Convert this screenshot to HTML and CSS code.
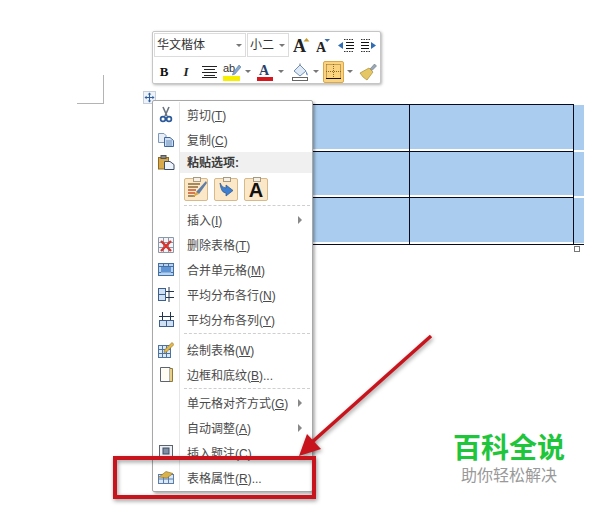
FILE: index.html
```html
<!DOCTYPE html>
<html lang="zh-CN">
<head>
    <meta charset="UTF-8">
    <meta name="viewport" content="width=device-width, initial-scale=1.0">
    <title>表格属性</title>
    <link rel="stylesheet" href="styles.css">
</head>
<body>
    <!-- page corner mark -->
    <div class="crop-mark"></div>

    <!-- selected table -->
    <div class="word-table">
        <div class="cell"></div><div class="cell"></div><div class="strip"></div>
        <div class="cell"></div><div class="cell"></div><div class="strip"></div>
        <div class="cell"></div><div class="cell"></div><div class="strip"></div>
    </div>
    <div class="resize-handle"></div>
    <div class="move-handle">
        <svg width="11" height="11" viewBox="0 0 11 11"><path d="M5.5 0.5 L7.3 2.6 H3.7 Z M5.5 10.5 L7.3 8.4 H3.7 Z M0.5 5.5 L2.6 3.7 V7.3 Z M10.5 5.5 L8.4 3.7 V7.3 Z" fill="#2f5f9e"/><path d="M5.5 2 V9 M2 5.5 H9" stroke="#2f5f9e" stroke-width="1.1"/></svg>
    </div>

    <!-- mini toolbar -->
    <div class="toolbar">
        <div class="tb-row">
            <div class="combo combo-font"><span>华文楷体</span><i class="caret"></i></div>
            <div class="combo combo-size"><span>小二</span><i class="caret"></i></div>
            <div class="tb-btn grow">
                <svg width="17" height="22" viewBox="0 0 17 22"><text x="0" y="18" class="glyph-a">A</text><path d="M13.5 4 L16.5 7.5 H10.5 Z" fill="#c79a2c"/></svg>
            </div>
            <div class="tb-btn shrink">
                <svg width="14" height="22" viewBox="0 0 14 22"><text x="0" y="18" class="glyph-a small">A</text><path d="M8.5 5 H14 L11.2 8 Z" fill="#3a6ea5"/></svg>
            </div>
            <div class="tb-btn indent">
                <svg width="17" height="15" viewBox="0 0 17 15"><path d="M6 1.5 H16 M6 13.5 H16" stroke="#333" stroke-dasharray="1.5 1"/><path d="M8 4.5 H16 M8 7.5 H16 M8 10.5 H16" stroke="#111"/><path d="M0 7.5 L5 4 V11 Z" fill="#2f6db5"/></svg>
            </div>
            <div class="tb-btn indent2">
                <svg width="17" height="15" viewBox="0 0 17 15"><path d="M1 1.5 H11 M1 13.5 H11" stroke="#333" stroke-dasharray="1.5 1"/><path d="M1 4.5 H9 M1 7.5 H9 M1 10.5 H9" stroke="#111"/><path d="M16 7.5 L11 4 V11 Z" fill="#2f6db5"/></svg>
            </div>
        </div>
        <div class="tb-row row-two">
            <div class="tb-btn w-b"><b class="bold">B</b></div>
            <div class="tb-btn w-i"><i class="italic">I</i></div>
            <div class="tb-btn w-align">
                <svg width="15" height="13" viewBox="0 0 15 13"><path d="M0 1.5 H15 M2 4.5 H13 M0 7.5 H15 M2 10.5 H13 M0 12.5 H15" stroke="#222" stroke-width="1"/></svg>
            </div>
            <div class="tb-btn w-hl">
                <svg width="18" height="19" viewBox="0 0 18 19"><text x="0" y="10" class="glyph-ab">ab</text><path d="M10 11 L16 3 L18 5 L12 12 L9.5 13 Z" fill="#8aa7cc" stroke="#5b7aa5" stroke-width=".6"/><rect x="0" y="14" width="17" height="5" fill="#f6f000"/></svg>
            </div>
            <i class="caret w-caret"></i>
            <div class="tb-btn w-color">
                <svg width="17" height="18" viewBox="0 0 17 18"><text x="2" y="12" class="glyph-color">A</text><rect x="0" y="14" width="16" height="4" fill="#d8141c"/></svg>
            </div>
            <i class="caret w-caret"></i>
            <div class="tb-btn w-fill">
                <svg width="17" height="18" viewBox="0 0 17 18"><path d="M2 8 L8 2 L14 8 L8 13 Z" fill="#dfeaf6" stroke="#6f8fb5"/><path d="M8 2 V0.5" stroke="#777"/><path d="M14 8 Q16 11 15.5 12.5 Q14 12 14 8 Z" fill="#3a6fb5"/><rect x="0.5" y="14.5" width="15" height="3" fill="#fff" stroke="#666"/></svg>
            </div>
            <i class="caret w-caret"></i>
            <div class="tb-btn w-border">
                <svg width="15" height="15" viewBox="0 0 15 15"><path d="M0.5 0.5 H14.5 V14.5 M0.5 0.5 V14.5 M7.5 0 V15 M0 7.5 H15" stroke="#8a6a2a" stroke-width="1" stroke-dasharray="1 1" fill="none"/><path d="M0 14.5 H15" stroke="#111" stroke-width="1"/></svg>
            </div>
            <i class="caret w-caret"></i>
            <div class="tb-btn w-brush">
                <svg width="18" height="18" viewBox="0 0 18 18"><path d="M11 6 L15.5 1 L17.5 3 L13 7.5 Z" fill="#9aa6b5" stroke="#6d7885" stroke-width=".6"/><path d="M10 5 L14 9 L8 17 Q4 15 1 10 Z" fill="#e6c766" stroke="#a88c3a" stroke-width=".7"/></svg>
            </div>
        </div>
    </div>

    <!-- context menu -->
    <div class="menu">
        <div class="item">
            <div class="gutter"><svg width="14" height="17" viewBox="0 0 14 17"><path d="M4 1 L8 10 M10 1 L6 10" stroke="#6a7480" stroke-width="1.6"/><circle cx="4" cy="13" r="2.4" fill="none" stroke="#2c5a9a" stroke-width="1.7"/><circle cx="10" cy="13" r="2.4" fill="none" stroke="#2c5a9a" stroke-width="1.7"/></svg></div>
            <div class="label">剪切(<u>T</u>)</div>
        </div>
        <div class="item">
            <div class="gutter"><svg width="16" height="14" viewBox="0 0 16 14"><path d="M0.5 0.5 H6 L8 2.5 V9.5 H0.5 Z" fill="#e8eef6" stroke="#7c98bc"/><path d="M6.5 4.5 H12 L15.5 7.5 V13.5 H6.5 Z" fill="#cfe0f3" stroke="#3e669c"/><path d="M8 8 H14 M8 10 H14 M8 12 H14" stroke="#6d8fbb"/></svg></div>
            <div class="label">复制(<u>C</u>)</div>
        </div>
        <div class="item item-head">
            <div class="gutter"><svg width="17" height="15" viewBox="0 0 17 15"><rect x="0.5" y="2.5" width="10" height="11.5" fill="#d8a94b" stroke="#8e6a22"/><rect x="3" y="0.5" width="5" height="3" fill="#888" stroke="#555"/><path d="M6.5 6.5 H12 L16 9.5 V14.5 H6.5 Z" fill="#eef3fa" stroke="#3e4d66"/></svg></div>
            <div class="label strong">粘贴选项:</div>
        </div>
        <div class="item item-paste">
            <div class="gutter"></div>
            <div class="paste-row">
                <div class="clip">
                    <svg width="21" height="18" viewBox="0 0 21 18"><path d="M2 4 H14 M2 7 H12 M2 16 H9" stroke="#8c6a3a" stroke-width="1.4"/><path d="M2 10 H10 M2 13 H9" stroke="#c9552c" stroke-width="1.4"/><path d="M20 1 L10 12 L13 14 L21 3 Z" fill="#5f7fa8"/><path d="M10 12 L7 17 L13 14 Z" fill="#d9a93f"/></svg>
                </div>
                <div class="clip">
                    <svg width="16" height="15" viewBox="0 0 16 15"><path d="M2 1 Q4 6 8 6 V3 L15 8.5 L8 14 V11 Q3 11 2 1 Z" fill="#3f7fd0" stroke="#28568f" stroke-width=".7"/></svg>
                </div>
                <div class="clip"><span class="clip-a">A</span></div>
            </div>
        </div>
        <div class="sep"><div class="gutter"></div><div class="dash"></div></div>
        <div class="item">
            <div class="gutter"></div>
            <div class="label">插入(<u>I</u>)</div><i class="sub"></i>
        </div>
        <div class="item">
            <div class="gutter"><svg width="16" height="16" viewBox="0 0 16 16"><path d="M0.5 0.5 H15.5 V15.5 H0.5 Z M0.5 5.5 H15.5 M0.5 10.5 H15.5 M5.5 0.5 V15.5 M10.5 0.5 V15.5" fill="#f2f4f7" stroke="#8b98a8"/><path d="M3 4 L13 14 M13 4 L3 14" stroke="#d8322a" stroke-width="2.4"/></svg></div>
            <div class="label">删除表格(<u>T</u>)</div>
        </div>
        <div class="item">
            <div class="gutter"><svg width="16" height="13" viewBox="0 0 16 13"><rect x="0.5" y="0.5" width="15" height="12" fill="#b9d2ef" stroke="#44719f"/><rect x="3" y="3.5" width="10" height="6" fill="#5f94d4"/><path d="M0.5 3.5 H15.5 M0.5 9.5 H3 M13 9.5 H15.5 M5.5 0.5 V3.5 M10.5 0.5 V3.5" stroke="#44719f"/></svg></div>
            <div class="label">合并单元格(<u>M</u>)</div>
        </div>
        <div class="item">
            <div class="gutter"><svg width="16" height="15" viewBox="0 0 16 15"><rect x="0.5" y="1.5" width="7" height="12" fill="#cfe0f3" stroke="#3e5f8c"/><path d="M0.5 7.5 H7.5" stroke="#3e5f8c"/><path d="M11 0 V15 M8 4.5 H16 M8 10.5 H16" stroke="#24364f"/></svg></div>
            <div class="label">平均分布各行(<u>N</u>)</div>
        </div>
        <div class="item">
            <div class="gutter"><svg width="15" height="15" viewBox="0 0 15 15"><rect x="0.5" y="8.5" width="14" height="6" fill="#cfe0f3" stroke="#3e5f8c"/><path d="M7.5 8.5 V14.5" stroke="#3e5f8c"/><path d="M0 4.5 H15 M3.5 0 V8 M11.5 0 V8" stroke="#24364f"/></svg></div>
            <div class="label">平均分布各列(<u>Y</u>)</div>
        </div>
        <div class="sep sep-wide"><div class="gutter"></div><div class="dash"></div></div>
        <div class="item">
            <div class="gutter"><svg width="16" height="16" viewBox="0 0 16 16"><rect x="0.5" y="3.5" width="12" height="12" fill="#dbe8f6" stroke="#4d739f"/><path d="M0.5 7.5 H12.5 M0.5 11.5 H12.5 M4.5 3.5 V15.5 M8.5 3.5 V15.5" stroke="#4d739f"/><path d="M14 0.5 L16 2.5 L8.5 10 L6 10.5 L6.5 8 Z" fill="#e3b94a" stroke="#8a6a22" stroke-width=".6"/></svg></div>
            <div class="label">绘制表格(<u>W</u>)</div>
        </div>
        <div class="item">
            <div class="gutter"><svg width="13" height="15" viewBox="0 0 13 15"><path d="M0.5 0.5 H10 V14.5 H0.5 Z" fill="#fffdf3" stroke="#5b6470"/><path d="M10 1.5 H12.5 V14.5 H10" fill="#e9cf86" stroke="#8f7a3c"/></svg></div>
            <div class="label">边框和底纹(<u>B</u>)...</div>
        </div>
        <div class="sep"><div class="gutter"></div><div class="dash"></div></div>
        <div class="item">
            <div class="gutter"></div>
            <div class="label">单元格对齐方式(<u>G</u>)</div><i class="sub"></i>
        </div>
        <div class="item">
            <div class="gutter"></div>
            <div class="label">自动调整(<u>A</u>)</div><i class="sub"></i>
        </div>
        <div class="item">
            <div class="gutter"><svg width="14" height="15" viewBox="0 0 14 15"><rect x="0.5" y="0.5" width="13" height="11" fill="#eef2f7" stroke="#5b6470"/><rect x="4" y="3" width="6" height="6" fill="#7f8ea3" stroke="#3e4d66"/><path d="M0 14 H14" stroke="#33415a" stroke-width="2"/></svg></div>
            <div class="label">插入题注(<u>C</u>)</div>
        </div>
        <div class="item">
            <div class="gutter"><svg width="16" height="13" viewBox="0 0 16 13"><rect x="0.5" y="3.5" width="15" height="9" fill="#dbe8f6" stroke="#5d7ea8"/><path d="M0.5 8 H15.5 M5.5 3.5 V12.5 M10.5 3.5 V12.5" stroke="#5d7ea8"/><path d="M1 6 L8 0.5 L15 2.5 L9 7 Z" fill="#d9b24a" stroke="#8a6a22" stroke-width=".6"/></svg></div>
            <div class="label">表格属性(<u>R</u>)...</div>
        </div>
    </div>

    <!-- red annotation -->
    <svg class="annotation" width="612" height="518" viewBox="0 0 612 518">
        <rect x="115" y="458" width="199" height="39" fill="none" stroke="#c8141c" stroke-width="4"/>
        <path d="M431 336 L311 443" stroke="#c8141c" stroke-width="3.5" fill="none"/>
        <path d="M299 456 L307 434 L321 449 Z" fill="#c8141c"/>
    </svg>

    <!-- watermark -->
    <div class="mark">
        <div class="mark-title">百科全说</div>
        <div class="mark-sub">助你轻松解决</div>
    </div>
</body>
</html>
```
FILE: styles.css
```css
/* Global styles */
body {
    font-family: "Liberation Sans", "Noto Sans CJK SC", sans-serif;
    font-size: 12px;
    color: #4a4a4a;
    background-color: #fff;
    margin: 0;
    width: 612px;
    height: 518px;
    position: relative;
    overflow: hidden;
}
svg {
    display: block;
}

/* Free canvas items */
.crop-mark {
    position: absolute;
    left: 77px;
    top: 75px;
    width: 26px;
    height: 28px;
    border-right: 1px solid #b4b4b4;
    border-bottom: 1px solid #b4b4b4;
}
.word-table {
    position: absolute;
    left: 154px;
    top: 104px;
    display: grid;
    grid-template-columns: 256px 164px 10px;
    grid-template-rows: 47px 46px 47px;
    border-bottom: 1px solid #0a0a1e;
    width: 430px;
}
.cell {
    background-color: #a9ccef;
    border-top: 1px solid #0a0a1e;
    border-right: 1px solid #0a0a1e;
    box-shadow: inset 0 -2px 0 #fff;
}
.strip {
    background-color: #a9ccef;
    margin-top: 1px;
    box-shadow: inset 0 -1px 0 #fff;
}
.resize-handle {
    position: absolute;
    left: 574px;
    top: 246px;
    width: 4px;
    height: 4px;
    border: 1px solid #777;
    background-color: #fff;
}
.move-handle {
    position: absolute;
    left: 143px;
    top: 91px;
    width: 11px;
    height: 11px;
    padding: 0;
    border: 1px solid #c5cfdc;
    background-color: #eef3f9;
}

/* Mini toolbar */
.toolbar {
    position: absolute;
    left: 152px;
    top: 31px;
    width: 224px;
    height: 49px;
    padding: 1px 2px 1px 1px;
    background-color: #fff;
    border: 1px solid #c6c6c6;
    border-radius: 2px;
    box-shadow: 1px 1px 3px rgba(0, 0, 0, 0.3);
}
.tb-row {
    display: flex;
    align-items: center;
    height: 24px;
}
.row-two {
    margin-top: 3px;
    height: 23px;
}
.combo {
    display: flex;
    align-items: center;
    justify-content: space-between;
    box-sizing: border-box;
    height: 24px;
    border: 1px solid #dcdcdc;
    padding: 0 3px 3px 2px;
    color: #333;
    font-size: 12px;
}
.combo .caret {
    margin-top: 3px;
}
.combo-font {
    width: 92px;
}
.combo-size {
    width: 42px;
    margin-left: 1px;
}
.caret {
    display: block;
    width: 0;
    height: 0;
    border-left: 3px solid transparent;
    border-right: 3px solid transparent;
    border-top: 3px solid #777;
}
.w-caret {
    margin: 0 3px;
}
.tb-btn {
    display: flex;
    align-items: center;
    justify-content: center;
    flex: none;
}
.grow {
    margin-left: 4px;
}
.shrink {
    margin-left: 6px;
}
.indent {
    margin-left: 8px;
}
.indent2 {
    margin-left: 5px;
}
.glyph-a {
    font: bold 18px "Liberation Serif", serif;
    fill: #222;
}
.glyph-a.small {
    font-size: 14px;
}
.glyph-ab {
    font: 11px "Liberation Sans", sans-serif;
    fill: #333;
}
.glyph-color {
    font: bold 14px "Liberation Serif", serif;
    fill: #2b3f6b;
}
.bold {
    font: bold 13px "Liberation Serif", serif;
    color: #111;
}
.italic {
    font: italic bold 13px "Liberation Serif", serif;
    color: #222;
}
.w-b {
    width: 20px;
}
.w-i {
    width: 22px;
    margin-left: 1px;
}
.w-align {
    width: 24px;
}
.w-hl {
    width: 20px;
    margin-left: 1px;
}
.w-color {
    width: 19px;
    margin-left: 2px;
}
.w-fill {
    width: 20px;
    margin-left: 3px;
}
.w-border {
    box-sizing: border-box;
    width: 21px;
    height: 22px;
    margin-left: 1px;
    background-color: #fbd27e;
    border: 1px solid #d8a84a;
    border-radius: 2px;
}
.w-brush {
    width: 20px;
    margin-left: 2px;
}

/* Context menu */
.menu {
    position: absolute;
    left: 152px;
    top: 100px;
    width: 159px;
    padding: 1px 0 0 0;
    height: 389px;
    background-color: #fff;
    border: 1px solid #a8a8a8;
    border-radius: 2px;
    box-shadow: 2px 2px 3px rgba(0, 0, 0, 0.3);
}
.item {
    display: flex;
    align-items: center;
    height: 25px;
    position: relative;
}
.gutter {
    flex: none;
    box-sizing: border-box;
    width: 27px;
    height: 100%;
    border-right: 1px solid #e6e6e6;
    display: flex;
    align-items: center;
    justify-content: center;
}
.label {
    padding-left: 7px;
    font-size: 12px;
    white-space: nowrap;
}
.strong {
    font-weight: bold;
    color: #3c3c3c;
}
.item-head {
    height: 21px;
}
.item-head .label {
    flex: 1;
    height: 100%;
    line-height: 23px;
    background-color: #f0f0f0;
}
.item-paste {
    height: 31px;
}
.paste-row {
    display: flex;
    gap: 6px;
    padding-left: 4px;
    margin-top: 1px;
}
.clip {
    box-sizing: border-box;
    width: 24px;
    height: 23px;
    display: flex;
    align-items: center;
    justify-content: center;
    position: relative;
    background-color: #fbe8c8;
    border: 1px solid #d8b98a;
    border-radius: 2px;
}
/* clipboard tab on top of each paste button */
.clip::before {
    content: "";
    position: absolute;
    left: 8px;
    top: -2px;
    width: 6px;
    height: 3px;
    background-color: #f4f0e6;
    border: 1px solid #a89a80;
}
.clip-a {
    font: bold 20px "Liberation Sans", sans-serif;
    color: #111;
    margin-top: 2px;
}
.sep {
    display: flex;
    height: 3px;
}
.sep-wide {
    height: 5px;
}
.dash {
    flex: 1;
    margin: 1px 2px 0 4px;
    border-top: 1px dashed #cfcfcf;
}
.sub {
    position: absolute;
    left: 145px;
    top: 9px;
    width: 0;
    height: 0;
    border-top: 4px solid transparent;
    border-bottom: 4px solid transparent;
    border-left: 4px solid #888;
}

/* Red annotation */
.annotation {
    position: absolute;
    left: 0;
    top: 0;
    filter: drop-shadow(1px 2px 2px rgba(0, 0, 0, 0.4));
}

/* Watermark */
.mark {
    position: absolute;
    left: 444px;
    top: 432px;
    width: 130px;
    text-align: center;
}
.mark-title {
    font-size: 28px;
    line-height: 34px;
    font-weight: bold;
    color: #1fc63c;
}
.mark-sub {
    font-size: 16px;
    line-height: 20px;
    color: #999;
}
```
